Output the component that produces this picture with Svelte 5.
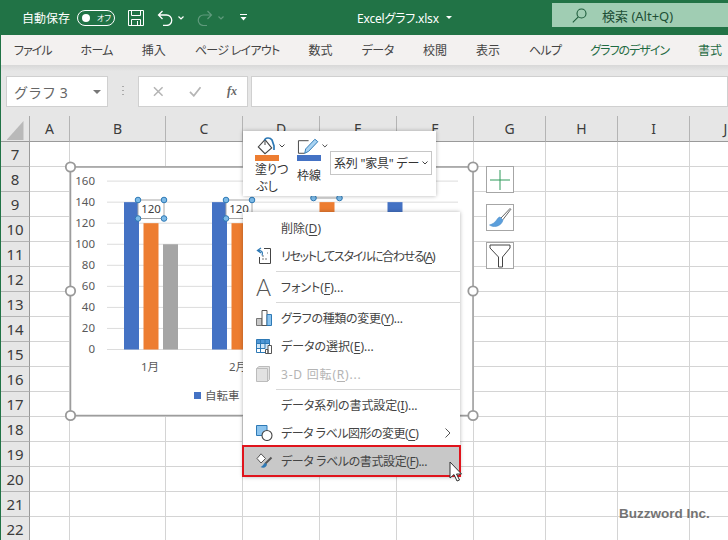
<script lang="ts">
    const columns = ["A", "B", "C", "D", "E", "F", "G", "H", "I", "J"];
    const rows = Array.from({ length: 16 }, (_, i) => i + 7);
    // tight = letter spacing, the kana in the original font are narrower than Noto's
    const tabs = [
        { label: "ファイル", tight: -1 },
        { label: "ホーム", tight: -0.7 },
        { label: "挿入", tight: 0 },
        { label: "ページ レイアウト", tight: -0.7 },
        { label: "数式", tight: 0 },
        { label: "データ", tight: -0.4 },
        { label: "校閲", tight: 0 },
        { label: "表示", tight: 0 },
        { label: "ヘルプ", tight: -0.7 },
        { label: "グラフのデザイン", tight: -1, green: true },
        { label: "書式", tight: 0, green: true },
    ];

    // chart geometry is in page pixels, the svg viewBox starts at the chart's corner
    const axis = [160, 140, 120, 100, 80, 60, 40, 20, 0];
    const zeroY = 349.5;
    const unit = 21.05 / 20;
    const groups = [
        { x: 124, values: [140, 120, 100] },
        { x: 212, values: [140, 120, 100] },
        { x: 300, values: [100, 140, 100] },
        { x: 387.5, values: [140, 120, 100] },
    ];
    const barColors = ["#4472c4", "#ed7d31", "#a5a5a5"];
    const handles = [
        [70.5, 167], [473, 167], [70.5, 291], [473, 291], [70.5, 415.5], [473, 415.5],
    ];
    const labelBoxes = [
        { x: 138, y: 200 },
        { x: 226, y: 200 },
        { x: 313.5, y: 179.5 },
    ];

    type Entry = { icon?: string; pre: string; key: string; post: string; tight?: number; disabled?: boolean; more?: boolean; active?: boolean } | { sep: true };
    const menu: Entry[] = [
        { pre: "削除(", key: "D", post: ")" },
        { icon: "reset", pre: "リセットしてスタイルに合わせる(", key: "A", post: ")", tight: -1.3 },
        { sep: true },
        { icon: "font", pre: "フォント(", key: "F", post: ")..." },
        { sep: true },
        { icon: "type", pre: "グラフの種類の変更(", key: "Y", post: ")...", tight: -0.3 },
        { icon: "select", pre: "データの選択(", key: "E", post: ")..." },
        { icon: "rotate", pre: "3-D 回転(", key: "R", post: ")...", tight: 0.8, disabled: true },
        { sep: true },
        { pre: "データ系列の書式設定(", key: "I", post: ")...", tight: -0.1 },
        { icon: "shape", pre: "データ ラベル図形の変更(", key: "C", post: ")", tight: -0.5, more: true },
        { icon: "format", pre: "データ ラベルの書式設定(", key: "F", post: ")...", tight: -0.4, active: true },
    ];
</script>

<div class="page">
    <header class="titlebar">
        <span class="autosave">自動保存</span>
        <span class="toggle"><i></i><b>オフ</b></span>
        <svg class="qat save" viewBox="0 0 16 16" fill="none" stroke="#fff" stroke-width="1">
            <path d="M.5.5h15v15H.5zM3.5.5v5h9v-5M3.5 15.500v-6h9v6M9.500 11v4" />
        </svg>
        <svg class="qat undo" viewBox="0 0 16 16" fill="none" stroke="#fff" stroke-width="1.300">
            <path d="M5.500 1 1.500 5l4 4M1.500 5h8a4.800 4.800 0 0 1 0 10.500H6" />
        </svg>
        <svg class="chev" viewBox="0 0 6 4" fill="none" stroke="#fff" stroke-width="1.200"><path d="m.5.500 2.500 2.500L5.500.500" /></svg>
        <svg class="qat redo" viewBox="0 0 16 16" fill="none" stroke="#5f9a7c" stroke-width="1.200">
            <path d="M10.500 1l4 4-4 4M14.500 5h-8a4.800 4.800 0 0 0 0 10.500H10" />
        </svg>
        <svg class="chev dim" viewBox="0 0 6 4" fill="none" stroke="#5f9a7c" stroke-width="1.200"><path d="m.5.500 2.500 2.500L5.500.500" /></svg>
        <svg class="more" viewBox="0 0 7 7" fill="#fff"><path d="M0 0h7v1H0zM.5 3h6L3.500 6.500z" /></svg>
        <span class="filename">Excelグラフ.xlsx</span>
        <svg class="caret" viewBox="0 0 6 3" fill="#fff"><path d="M0 0h6L3 3z" /></svg>
        <div class="search">
            <svg viewBox="0 0 15 15" fill="none" stroke="#1d5c3b" stroke-width="1.100"><circle cx="9.500" cy="5.500" r="4.500" /><path d="M6.300 8.800.8 14.300" /></svg>
            <span>検索 (Alt+Q)</span>
        </div>
    </header>

    <nav class="tabs">
        {#each tabs as tab}
            <span class="tab" class:green={tab.green} style="letter-spacing: {tab.tight}px">{tab.label}</span>
        {/each}
    </nav>

    <div class="formula">
        <div class="namebox">
            <span>グラフ 3</span>
            <svg viewBox="0 0 8 4" fill="#777"><path d="M0 0h8L4 4z" /></svg>
        </div>
        <div class="grip"></div>
        <div class="fxbox">
            <svg viewBox="0 0 11 11" fill="none" stroke="#b5b5b5" stroke-width="1.600"><path d="m1 1 9 9M10 1l-9 9" /></svg>
            <svg viewBox="0 0 13 11" fill="none" stroke="#b5b5b5" stroke-width="1.800"><path d="m1 6 4 4 7-9" /></svg>
            <span>fx</span>
        </div>
        <div class="input"></div>
    </div>

    <div class="sheet">
        <div class="corner"><i></i></div>
        {#each columns as c}
            <div class="colhead">{c}</div>
        {/each}
        {#each rows as r}
            <div class="rowhead">{r}</div>
            {#each columns as c}
                <div class="cell"></div>
            {/each}
        {/each}
    </div>

    <svg class="chart" viewBox="60 157 425 270" width="425" height="270">
        <rect x="70.500" y="167" width="402.500" height="248.500" fill="#fff" stroke="#9d9d9d" stroke-width="1.500" />
        {#each axis as v}
            <line x1="107" x2="458" y1={zeroY - v * unit} y2={zeroY - v * unit} stroke="#dcdcdc" />
            <text class="tick" x="95" y={zeroY - v * unit + 3.500} text-anchor="end">{v}</text>
        {/each}
        {#each groups as g}
            {#each g.values as v, i}
                <rect x={g.x + i * 19.500} y={zeroY - v * unit} width="15" height={v * unit} fill={barColors[i]} />
            {/each}
        {/each}
        <text class="tick" x="150" y="371" text-anchor="middle">1月</text>
        <text class="tick" x="238" y="371" text-anchor="middle">2月</text>
        <rect x="194" y="392" width="7" height="7" fill="#4472c4" />
        <text class="tick" x="205" y="400">自転車</text>
        {#each labelBoxes as b}
            <rect x={b.x} y={b.y} width="26" height="18.500" fill="#fff" stroke="#a8a8a8" />
            <text class="tick dark" x={b.x + 13} y={b.y + 13} text-anchor="middle">120</text>
            {#each [[0, 0], [26, 0], [0, 18.500], [26, 18.500]] as [dx, dy]}
                <circle cx={b.x + dx} cy={b.y + dy} r="2.800" fill="#7dbbe8" stroke="#2e79b5" />
            {/each}
        {/each}
        {#each handles as [x, y]}
            <circle cx={x} cy={y} r="4.700" fill="#fff" stroke="#999" stroke-width="1.800" />
        {/each}
    </svg>

    <div class="mini">
        <div class="mini-btn">
            <div class="mini-icon">
                <svg class="bucket" viewBox="0 0 20 18" fill="none">
                    <path d="M8 2.700 1.300 10 8 16.700 14.700 11z" stroke="#444" stroke-width="1.100" fill="#fff" />
                    <path d="M8 8V3" stroke="#444" />
                    <path d="M7.500 3.500C8 .5 13 0 15 3l2 6v4" stroke="#2e79b5" stroke-width="1.700" />
                </svg>
                <svg class="mini-chev" viewBox="0 0 6 4" fill="none" stroke="#444"><path d="m.5.500 2.500 2.500L5.500.500" /></svg>
            </div>
            <i class="swatch orange"></i>
            <span>塗りつ<br />ぶし</span>
        </div>
        <div class="mini-btn second">
            <div class="mini-icon">
                <svg class="pen" viewBox="0 0 24 17" fill="none">
                    <path d="M8 15.500H1.500v-13H12" stroke="#444" stroke-width="1" />
                    <path d="m8 15.500 1-4.500L18.500 1l3 2.500-9.500 10z" stroke="#2e79b5" stroke-width="1" fill="#a9d3f2" />
                </svg>
                <svg class="mini-chev" viewBox="0 0 6 4" fill="none" stroke="#444"><path d="m.5.500 2.500 2.500L5.500.500" /></svg>
            </div>
            <i class="swatch blue"></i>
            <span class="single">枠線</span>
        </div>
        <div class="series">
            <span>系列 "家具" デー</span>
            <svg viewBox="0 0 6 4" fill="none" stroke="#444"><path d="m.5.500 2.500 2.500L5.500.500" /></svg>
        </div>
    </div>

    <div class="menu">
        {#each menu as item}
            {#if "sep" in item}
                <div class="sep"></div>
            {:else}
                <div class="item" class:disabled={item.disabled} class:active={item.active}>
                    <div class="icon">
                        {#if item.icon === "reset"}
                            <svg width="15" height="18" viewBox="0 0 15 18" fill="none">
                                <path d="M8 1.500h6.500v15h-11V10" stroke="#444" />
                                <path d="M6 9h2M6 12h5M11 6h1" stroke="#777" stroke-dasharray="2 1" />
                                <path d="M5 1 1.500 3.500 5 6M2 3.500c3.500-.5 5.500 2 4 5" stroke="#2e79b5" stroke-width="1.300" />
                            </svg>
                        {:else if item.icon === "font"}
                            <span class="big-a">A</span>
                        {:else if item.icon === "type"}
                            <svg width="16" height="16" viewBox="0 0 16 16">
                                <path d="M.5 8.500h5.500v7H.5z" fill="#c8c8c8" stroke="#777" />
                                <path d="M6 .5h5v15H6z" fill="#fff" stroke="#555" />
                                <path d="M11 4.500h4.500v11H11z" fill="#8cc4ee" stroke="#2e79b5" />
                            </svg>
                        {:else if item.icon === "select"}
                            <svg width="16" height="15" viewBox="0 0 16 15" fill="none">
                                <path d="M.5.500h13v4h-13z" fill="#4f97d6" />
                                <path d="M.5 5h12v5H.5z" fill="#cfe6f8" />
                                <path d="M9 13.500H.5V.5h13v7M4.500.5v13M9 .5v9M.5 4.500h13M.5 9.500H9" stroke="#2e79b5" />
                                <path d="M9.500 10.500h2.500v4H9.500zM12 6.500h3.500v8H12z" fill="#fff" stroke="#555" />
                            </svg>
                        {:else if item.icon === "rotate"}
                            <svg width="14" height="16" viewBox="0 0 14 16">
                                <path d="M.5 2.500 3 .5h10.500v13l-2 2H.5z" fill="#e2e2e2" stroke="#bcbcbc" />
                                <path d="M.5 2.500h11v13" fill="none" stroke="#bcbcbc" />
                            </svg>
                        {:else if item.icon === "shape"}
                            <svg width="17" height="16" viewBox="0 0 17 16">
                                <path d="M.5.500h10.500v10H.5z" fill="#8cc4ee" stroke="#2e79b5" />
                                <circle cx="11" cy="10.500" r="5" fill="#fff" stroke="#444" stroke-width="1.100" />
                            </svg>
                        {:else if item.icon === "format"}
                            <svg width="17" height="16" viewBox="0 0 17 16" fill="none">
                                <path d="M5 .8 1 5.500 5 10l4.500-4.500z" fill="#fff" stroke="#555" />
                                <path d="M15.500 4.500 9 11" stroke="#555" stroke-width="2" />
                                <path d="M9.500 10c-2 0-2 3-5 4 3 1.500 6 .5 6.500-2.500z" fill="#2e79b5" />
                            </svg>
                        {/if}
                    </div>
                    <span class="text" style="letter-spacing: {item.tight ?? 0}px">{item.pre}<u>{item.key}</u>{item.post}</span>
                    {#if item.more}
                        <svg class="arrow" viewBox="0 0 6 10" fill="none" stroke="#555"><path d="m.5.500 4.500 4.500-4.500 4.500" /></svg>
                    {/if}
                </div>
            {/if}
        {/each}
    </div>

    <div class="sidebtns">
        <div class="side">
            <svg width="22" height="22" viewBox="0 0 22 22" stroke="#2f9a5b"><path d="M11 1v20M1 11h20" /></svg>
        </div>
        <div class="side">
            <svg width="24" height="22" viewBox="0 0 24 22" fill="none">
                <path d="M13 11 22 1.500l.8.8-8 10.500" fill="#fff" stroke="#666" />
                <path d="M12 10c-3 0-3 6-10.500 8 3 2.500 11.500 2.500 13.500-5z" fill="#5b9fdc" stroke="#4f8fca" stroke-width=".6" />
            </svg>
        </div>
        <div class="side">
            <svg width="22" height="24" viewBox="0 0 22 24" fill="none" stroke="#444"><path d="M1 1h20v3l-7.500 9v10h-4V13L1 4z" /></svg>
        </div>
    </div>

    <svg class="cursor" width="14" height="23" viewBox="0 0 14 23">
        <path d="M1 1v16l4-3.500L8 20l2.500-1-3-6h5z" fill="#fff" stroke="#333" />
    </svg>

    <div class="watermark">Buzzword Inc.</div>
</div>

<style>
    :global(body) {
        margin: 0;
        background: #fff;
    }
    .page {
        position: relative;
        width: 728px;
        height: 540px;
        overflow: hidden;
        box-sizing: border-box;
        border-left: 1px solid #217346;
        font-family: "Noto Sans", "Noto Sans CJK JP", sans-serif;
        color: #444;
    }

    /* title bar */
    .titlebar {
        height: 35px;
        margin-left: -1px;
        background: #217346;
        color: #fff;
        display: flex;
        align-items: center;
        font-size: 12px;
        font-feature-settings: "palt";
    }
    .autosave {
        margin-left: 22px;
        width: 48px;
        white-space: nowrap;
    }
    .toggle {
        width: 38px;
        height: 16px;
        margin-left: 7px;
        box-sizing: border-box;
        border: 1px solid #fff;
        border-radius: 8px;
        display: flex;
        align-items: center;
        gap: 7px;
        padding-left: 4px;
    }
    .toggle i {
        width: 8px;
        height: 8px;
        border-radius: 50%;
        background: #fff;
    }
    .toggle b {
        font-size: 8px;
        font-weight: 400;
    }
    .qat {
        width: 16px;
        height: 16px;
    }
    .save {
        margin-left: 13px;
    }
    .undo {
        margin-left: 13px;
    }
    .chev {
        width: 6px;
        height: 4px;
        margin-left: 5px;
    }
    .redo {
        margin-left: 13px;
    }
    .more {
        width: 7px;
        height: 7px;
        margin-left: 16px;
    }
    .filename {
        margin-left: 110px;
        width: 82px;
        white-space: nowrap;
        letter-spacing: -0.2px;
    }
    .caret {
        width: 6px;
        height: 3px;
        margin-left: 7px;
    }
    .search {
        margin-left: auto;
        margin-bottom: 5px;
        width: 176px;
        height: 24px;
        background: #a0cdb3;
        color: #1d4f36;
        display: flex;
        align-items: center;
        gap: 15px;
        padding-left: 20px;
        box-sizing: border-box;
        font-size: 13px;
    }
    .search svg {
        width: 15px;
        height: 15px;
    }

    /* ribbon tabs */
    .tabs {
        height: 30px;
        background: #f3f1f0;
        display: flex;
        align-items: center;
        padding-left: 13px;
        gap: 29px;
        font-size: 12px;
        font-feature-settings: "palt";
        white-space: nowrap;
    }
    .tab.green {
        color: #1f6b43;
    }

    /* formula bar */
    .formula {
        height: 51px;
        background: linear-gradient(#d8d8d8, #e6e6e6 6px);
        display: flex;
        align-items: flex-start;
        padding: 11px 0 0 5px;
        box-sizing: border-box;
    }
    .namebox,
    .fxbox,
    .input {
        height: 31px;
        box-sizing: border-box;
        background: #fff;
        border: 1px solid #d0d0d0;
        display: flex;
        align-items: center;
    }
    .namebox {
        width: 102px;
        padding: 0 6px 0 7px;
        justify-content: space-between;
        font-size: 14px;
        color: #666;
    }
    .namebox svg {
        width: 8px;
        height: 4px;
    }
    .grip {
        width: 2px;
        height: 11px;
        margin: 10px 14px 0;
        background: repeating-linear-gradient(#aaa 0 1px, transparent 1px 4px);
    }
    .fxbox {
        width: 110px;
        padding: 0 10px 0 14px;
        gap: 25px;
    }
    .fxbox svg:first-child {
        width: 11px;
        height: 11px;
    }
    .fxbox svg:nth-child(2) {
        width: 13px;
        height: 11px;
    }
    .fxbox span {
        margin-left: 1px;
        font: italic 700 12px "Liberation Serif", serif;
        color: #666;
    }
    .input {
        flex: 1;
        margin-left: 3px;
    }

    /* cells */
    .sheet {
        display: grid;
        grid-template-columns: 29px 40px 96px 77px 77px 77px 77px 72px 72px 72px 72px;
        grid-template-rows: 26px;
        grid-auto-rows: 25px;
    }
    .corner {
        background: #e6e6e6;
        border-right: 1px solid #a8a8a8;
        border-bottom: 1px solid #9a9a9a;
        box-sizing: border-box;
        display: flex;
        justify-content: center;
        align-items: flex-end;
        padding-bottom: 1px;
    }
    .corner i {
        width: 17px;
        height: 19px;
        background: #b9b9b9;
        clip-path: polygon(100% 0, 100% 100%, 0 100%);
    }
    .colhead,
    .rowhead {
        background: #e6e6e6;
        box-sizing: border-box;
        display: flex;
        align-items: center;
        justify-content: center;
        color: #3c3c3c;
        font-size: 14px;
    }
    .colhead {
        border-right: 1px solid #b4b4b4;
        border-bottom: 1px solid #9a9a9a;
    }
    .rowhead {
        border-right: 1px solid #9a9a9a;
        border-bottom: 1px solid #b4b4b4;
        font-size: 15px;
    }
    .cell {
        box-sizing: border-box;
        border-right: 1px solid #d4d4d4;
        border-bottom: 1px solid #d4d4d4;
    }

    /* chart, floats over the cells */
    .chart {
        position: absolute;
        left: 59px;
        top: 157px;
        display: block;
    }
    .tick {
        font-size: 11.500px;
        fill: #595959;
        font-family: "Noto Sans", "Noto Sans CJK JP", sans-serif;
    }
    .tick.dark {
        fill: #404040;
    }

    /* mini toolbar */
    .mini {
        position: absolute;
        left: 242px;
        top: 131px;
        width: 193px;
        height: 65px;
        box-sizing: border-box;
        background: #fff;
        box-shadow: 0 0 4px rgba(0, 0, 0, 0.3);
        display: flex;
        padding: 6px 0 0 12px;
        font-size: 12px;
        font-feature-settings: "palt";
        color: #333;
    }
    .mini-btn {
        width: 31px;
        display: flex;
        flex-direction: column;
    }
    .mini-btn.second {
        margin-left: 11px;
    }
    .mini-icon {
        height: 18px;
        display: flex;
        align-items: center;
    }
    .bucket {
        width: 20px;
        height: 18px;
        margin-left: 2px;
    }
    .pen {
        width: 24px;
        height: 17px;
    }
    .mini-chev {
        width: 6px;
        height: 4px;
        margin-left: 2px;
    }
    .swatch {
        display: block;
        width: 24px;
        height: 6px;
    }
    .swatch.orange {
        background: #ed7d31;
    }
    .swatch.blue {
        background: #4472c4;
    }
    .mini-btn span {
        width: 24px;
        text-align: center;
        line-height: 17px;
        white-space: nowrap;
    }
    .mini-btn span.single {
        padding-top: 6px;
    }
    .series {
        width: 102px;
        height: 24px;
        margin: 14px 0 0 2px;
        box-sizing: border-box;
        border: 1px solid #c6c6c6;
        display: flex;
        align-items: center;
        justify-content: space-between;
        padding: 0 3px;
        white-space: nowrap;
        overflow: hidden;
        letter-spacing: -0.2px;
    }
    .series svg {
        width: 6px;
        height: 4px;
        flex: none;
    }

    /* context menu */
    .menu {
        position: absolute;
        left: 242px;
        top: 212px;
        width: 217px;
        height: 265px;
        box-sizing: border-box;
        background: #fff;
        padding-top: 2px;
        box-shadow: 0 0 4px rgba(0, 0, 0, 0.3);
        font-size: 12px;
        font-feature-settings: "palt";
        color: #444;
    }
    .item {
        position: relative;
        height: 28px;
        display: flex;
        align-items: center;
        white-space: nowrap;
    }
    .item u {
        text-underline-offset: 2px;
    }
    .item.disabled {
        color: #b4b4b4;
    }
    .item.active {
        height: 30px;
        margin-top: -1px;
        box-sizing: border-box;
        background: #c8c8c8;
        outline: 2px solid #e0141c;
        outline-offset: -1px;
    }
    .icon {
        width: 46px;
        padding-left: 13px;
        box-sizing: border-box;
        display: flex;
        align-items: center;
        flex: none;
        height: 100%;
        margin-right: -8px;
    }
    .big-a {
        font: 300 23px "Lato", sans-serif;
        line-height: 1;
        color: #555;
    }
    .arrow {
        width: 6px;
        height: 10px;
        position: absolute;
        right: 9px;
        top: 9px;
    }
    .sep {
        height: 3px;
        margin-left: 33px;
        background: linear-gradient(#d8d8d8, #d8d8d8) center / 100% 1px no-repeat;
    }

    /* chart side buttons */
    .sidebtns {
        position: absolute;
        left: 485px;
        top: 166px;
        display: flex;
        flex-direction: column;
        gap: 11px;
    }
    .side {
        width: 28px;
        height: 27px;
        box-sizing: border-box;
        border: 1px solid #a6a6a6;
        background: #fff;
        display: flex;
        align-items: center;
        justify-content: center;
    }

    .cursor {
        position: absolute;
        left: 448px;
        top: 461px;
    }
    .watermark {
        position: absolute;
        left: 618px;
        top: 506px;
        font: 700 13.500px "Liberation Sans", sans-serif;
        color: #666;
        opacity: 0.9;
        white-space: nowrap;
    }
</style>
